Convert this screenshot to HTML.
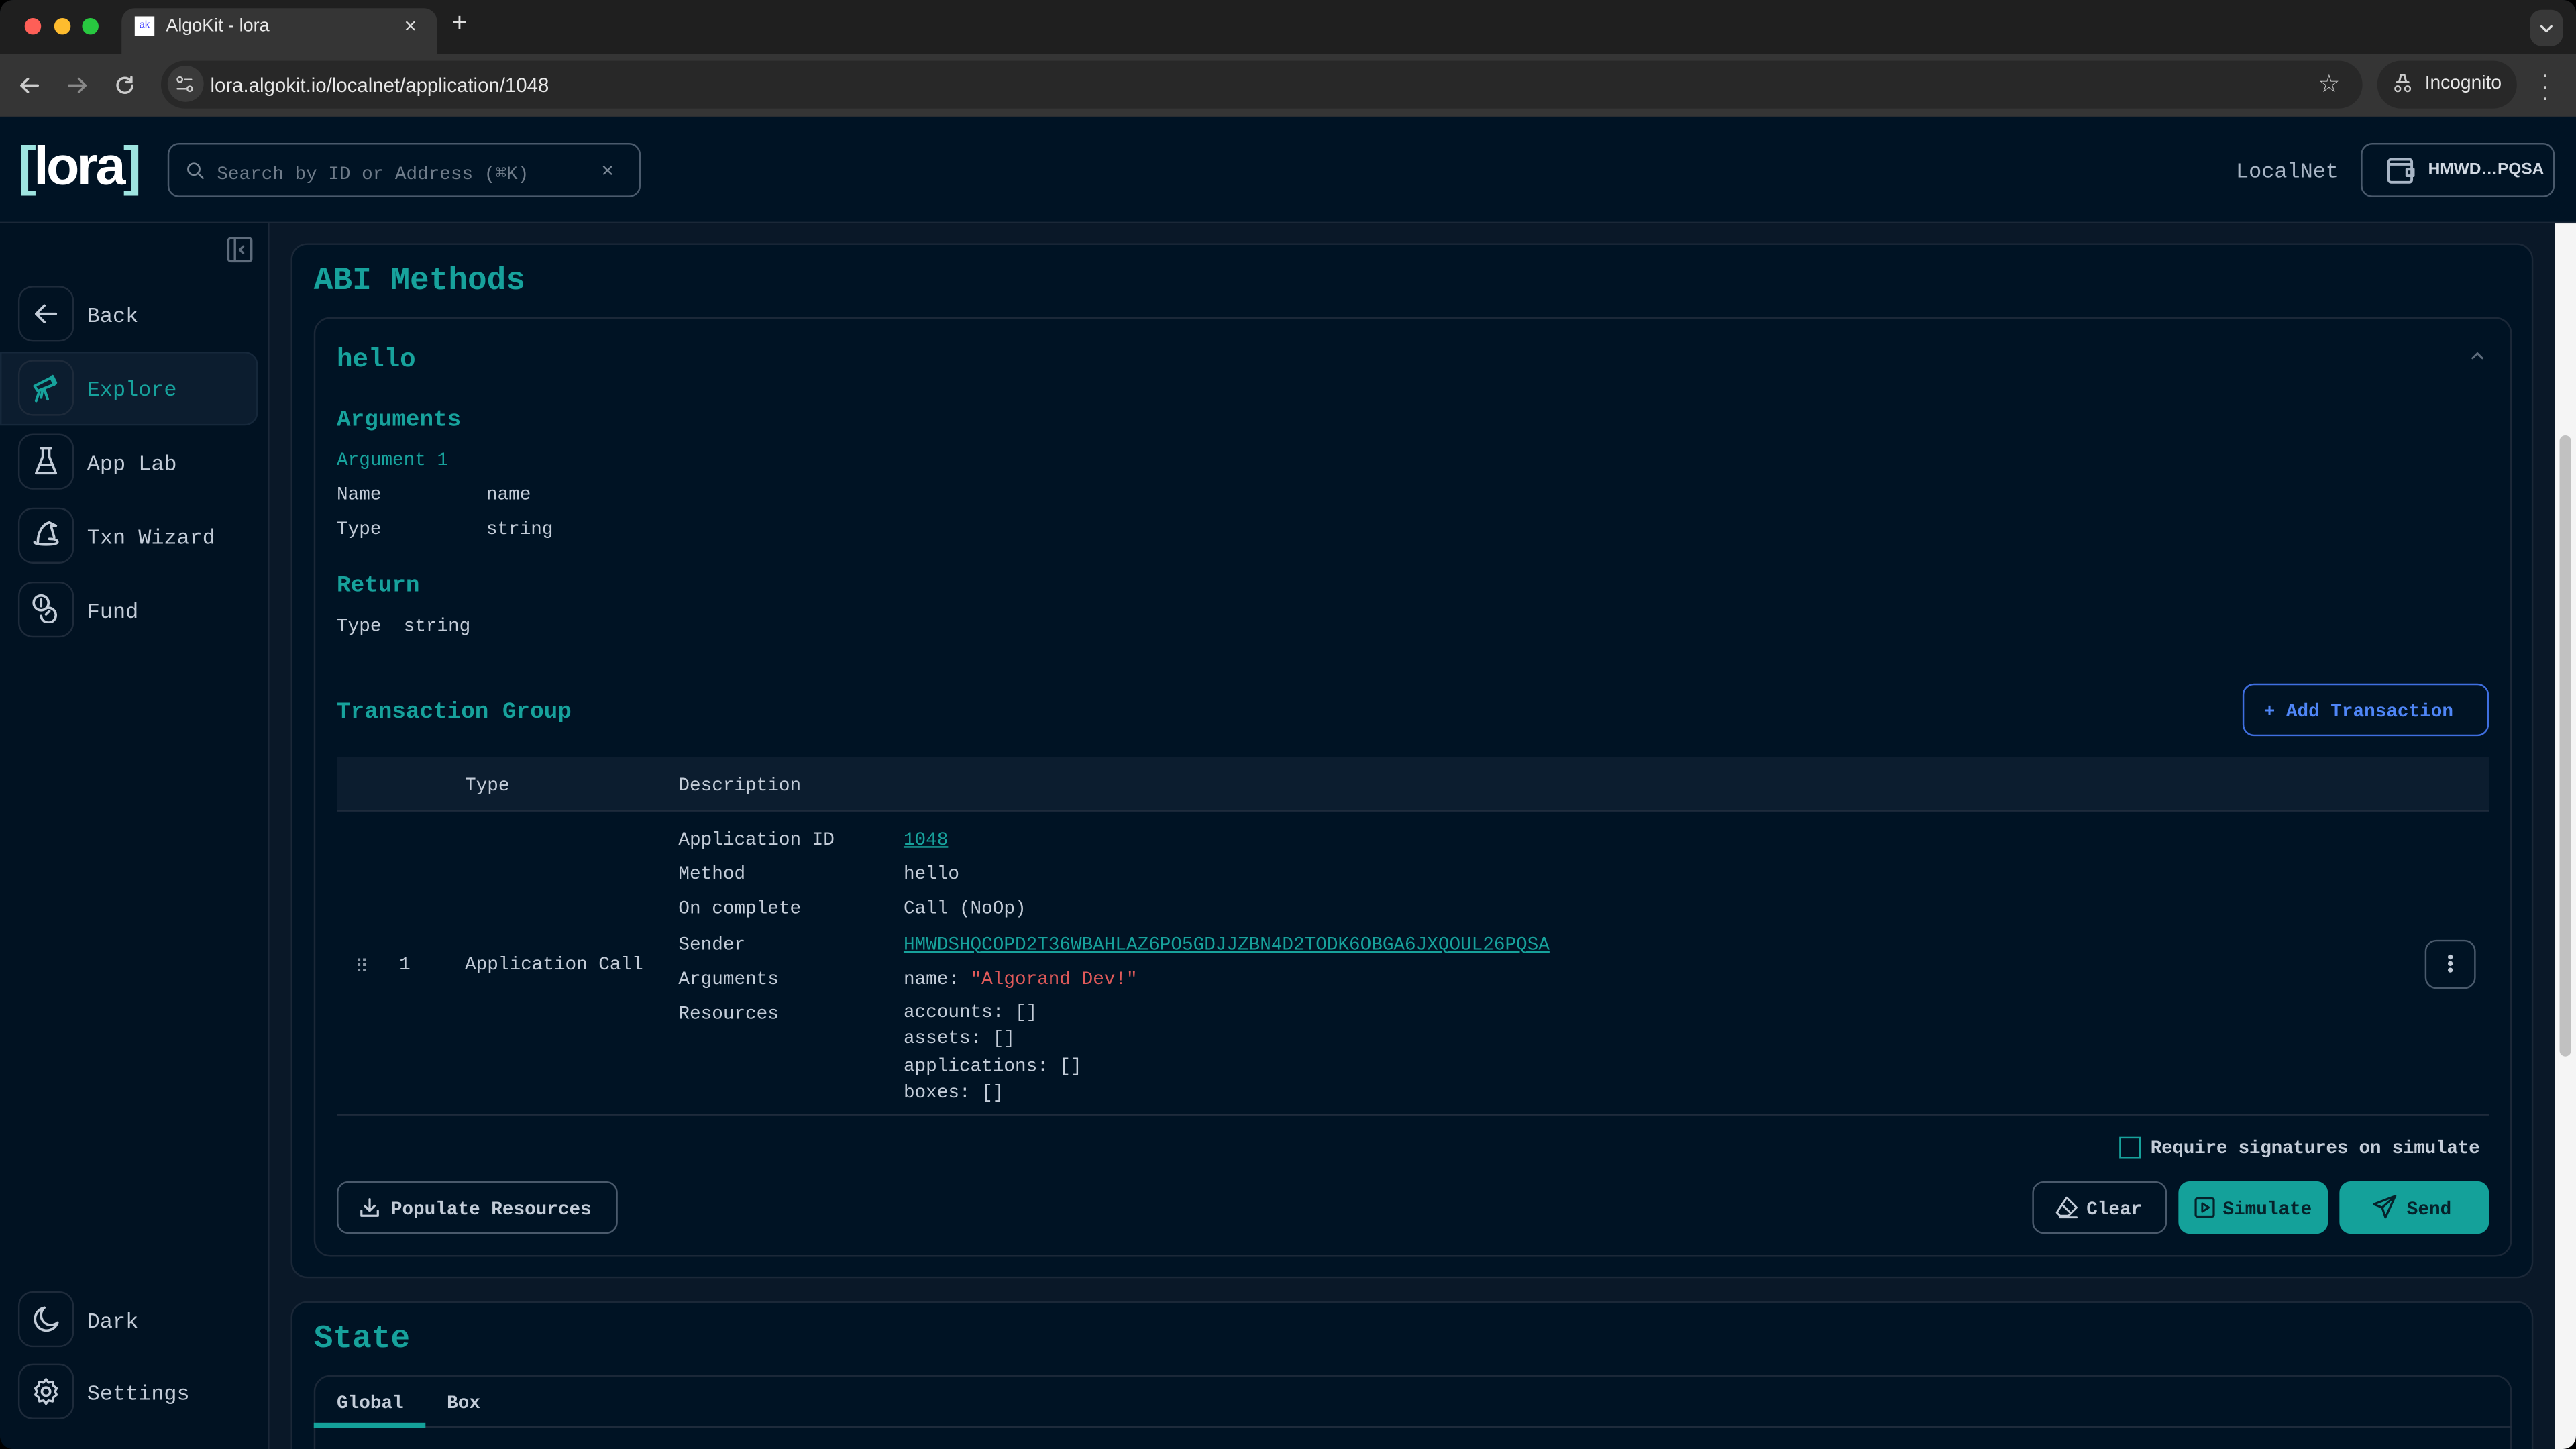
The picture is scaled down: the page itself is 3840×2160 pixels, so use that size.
<!DOCTYPE html>
<html><head><meta charset="utf-8"><style>
*{box-sizing:border-box;margin:0;padding:0}
html,body{width:3840px;height:2160px;overflow:hidden;background:#000}
#s{position:absolute;left:0;top:0;width:1568px;height:882px;transform:scale(2.44898);transform-origin:0 0;background:#0a1828;font-family:"Liberation Mono",monospace;color:#c3ccd8;overflow:hidden;border-radius:8px}
.a{position:absolute}
.sans{font-family:"Liberation Sans",sans-serif}
.t{color:#17a29c}
.box{position:absolute;border:1px solid #1e2b3b;border-radius:7px}
svg{position:absolute;fill:none;stroke-linecap:round;stroke-linejoin:round}
.fs{font-size:11.3px}
.fs,.t,.sb{margin-top:2px}
.bt{margin-top:4px}
</style></head><body><div id="s">
<!-- chrome -->
<div class="a" style="left:0;top:0;width:1568px;height:33px;background:#1f1f1f"></div>
<div class="a" style="left:15px;top:11px;width:10px;height:10px;border-radius:50%;background:#fe5f57"></div>
<div class="a" style="left:33px;top:11px;width:10px;height:10px;border-radius:50%;background:#febc2e"></div>
<div class="a" style="left:50px;top:11px;width:10px;height:10px;border-radius:50%;background:#28c840"></div>
<div class="a" style="left:74px;top:5px;width:192px;height:30px;background:#353535;border-radius:8px 8px 0 0"></div>
<div class="a sans" style="left:82px;top:10px;width:12px;height:12px;background:#fff;font-size:6px;color:#33f;text-align:center;line-height:12px">ak</div>
<div class="a sans" style="left:101px;top:10px;font-size:11px;color:#e8e8e8">AlgoKit - lora</div>
<div class="a sans" style="left:246px;top:8px;font-size:13px;color:#ddd">×</div>
<div class="a sans" style="left:275px;top:6px;font-size:16px;color:#ddd">+</div>
<div class="a" style="left:1540px;top:6px;width:20px;height:22px;background:#383838;border-radius:7px"></div>
<svg style="left:1545px;top:12px" width="10" height="10" viewBox="0 0 10 10"><path d="M2 4l3 3 3-3" stroke="#ddd" stroke-width="1.3"/></svg>
<div class="a" style="left:0;top:33px;width:1568px;height:38px;background:#353535"></div>
<svg style="left:10px;top:44px" width="16" height="16" viewBox="0 0 16 16"><path d="M13 8H3M7 4L3 8l4 4" stroke="#ccc" stroke-width="1.4"/></svg>
<svg style="left:39px;top:44px" width="16" height="16" viewBox="0 0 16 16"><path d="M3 8h10M9 4l4 4-4 4" stroke="#888" stroke-width="1.4"/></svg>
<svg style="left:68px;top:44px" width="16" height="16" viewBox="0 0 16 16"><path d="M12.5 8a4.5 4.5 0 1 1-1.3-3.2M12 3v3h-3" stroke="#ccc" stroke-width="1.4"/></svg>
<div class="a" style="left:98px;top:37px;width:1340px;height:29px;background:#282828;border-radius:15px"></div>
<div class="a" style="left:102px;top:40px;width:22px;height:22px;background:#3a3a3a;border-radius:50%"></div>
<svg style="left:106px;top:45px" width="13" height="13" viewBox="0 0 13 13"><circle cx="3.5" cy="3.5" r="1.5" stroke="#ccc"/><path d="M6.5 3.5h4M2 9h5" stroke="#ccc"/><circle cx="9.5" cy="9" r="1.5" stroke="#ccc"/></svg>
<div class="a sans" style="left:128px;top:45px;font-size:12px;color:#e8e8e8">lora.algokit.io/localnet/application/1048</div>
<div class="a sans" style="left:1411px;top:42px;font-size:15px;color:#ccc">☆</div>
<div class="a" style="left:1447px;top:37px;width:85px;height:29px;background:#282828;border-radius:15px"></div>
<div class="a sans" style="left:1476px;top:45px;font-size:11.5px;color:#e8e8e8">Incognito</div>
<svg style="left:1456px;top:44px" width="13" height="13" viewBox="0 0 13 13"><path d="M3 6h7M4.5 5.5l1-4h2l1 4" stroke="#ccc" stroke-width="1.2"/><circle cx="3.5" cy="10" r="1.6" stroke="#ccc"/><circle cx="9.5" cy="10" r="1.6" stroke="#ccc"/></svg>
<div class="a sans" style="left:1547px;top:42px;font-size:14px;color:#ccc;line-height:7px">·<br>·<br>·</div>
<!-- header -->
<div class="a" style="left:0;top:71px;width:1568px;height:65px;background:#001324;border-bottom:1px solid #1b2838"></div>
<div class="a sans" style="left:11px;top:82px;font-size:33px;font-weight:bold;color:#fff;letter-spacing:-1.5px"><span style="color:#9ee4e0">[</span>lora<span style="color:#9ee4e0">]</span></div>
<div class="a" style="left:102px;top:87px;width:288px;height:33px;border:1px solid #4a5a6c;border-radius:7px"></div>
<svg style="left:113px;top:98px" width="12" height="12" viewBox="0 0 12 12"><circle cx="5" cy="5" r="3.5" stroke="#7b8896" stroke-width="1.1"/><path d="M8 8l2.5 2.5" stroke="#7b8896" stroke-width="1.1"/></svg>
<div class="a fs" style="left:132px;top:97px;color:#6f7c8a">Search by ID or Address (⌘K)</div>
<div class="a sans" style="left:366px;top:96px;font-size:13px;color:#7b8896">×</div>
<div class="a" style="left:1361px;top:97px;font-size:13px;color:#a9b6c6">LocalNet</div>
<div class="a" style="left:1437px;top:87px;width:118px;height:33px;border:1px solid #4a5a6c;border-radius:7px"></div>
<svg style="left:1452px;top:94px" width="20" height="20" viewBox="0 0 20 20"><rect x="2" y="3" width="14" height="14" rx="1.5" stroke="#a9b6c6" stroke-width="1.6"/><path d="M2 6h13M13 9h4v4h-4z" stroke="#a9b6c6" stroke-width="1.6"/></svg>
<div class="a sans" style="left:1478px;top:98px;font-size:10px;font-weight:bold;color:#d0d8e2">HMWD…PQSA</div>
<!-- sidebar -->
<div class="a" style="left:0;top:136px;width:164px;height:746px;background:#011222;border-right:1px solid #1b2838"></div>
<svg style="left:138px;top:144px" width="16" height="16" viewBox="0 0 16 16"><rect x="1" y="1" width="14" height="14" rx="1.5" stroke="#5e6c7c" stroke-width="1.4"/><path d="M5 1v14M10 6l-2 2 2 2" stroke="#5e6c7c" stroke-width="1.4"/></svg>
<div class="a" style="left:0;top:214px;width:157px;height:45px;background:#0c1d2f;border:1px solid #16283b;border-radius:0 8px 8px 0"></div>
<div class="box" style="left:11px;top:174px;width:34px;height:34px;border-radius:9px"></div>
<div class="box" style="left:11px;top:219px;width:34px;height:34px;border-radius:9px"></div>
<div class="box" style="left:11px;top:264px;width:34px;height:34px;border-radius:9px"></div>
<div class="box" style="left:11px;top:309px;width:34px;height:34px;border-radius:9px"></div>
<div class="box" style="left:11px;top:354px;width:34px;height:34px;border-radius:9px"></div>
<div class="box" style="left:11px;top:786px;width:34px;height:34px;border-radius:9px"></div>
<div class="box" style="left:11px;top:830px;width:34px;height:34px;border-radius:9px"></div>
<svg style="left:20px;top:183px" width="16" height="16" viewBox="0 0 16 16"><path d="M14 8H2M7 3L2 8l5 5" stroke="#c3ccd8" stroke-width="1.5"/></svg>
<svg style="left:19px;top:227px" width="18" height="18" viewBox="0 0 18 18"><path d="M2 8l10-5 2 4-10 4zM5 11l-2 6M8 10l2 6M7 10l-1 5" stroke="#17a29c" stroke-width="1.6"/><path d="M12 3l1-1 2 4-1 1" stroke="#17a29c" stroke-width="1.6"/></svg>
<svg style="left:20px;top:272px" width="16" height="18" viewBox="0 0 16 18"><path d="M5 1h6M6 1v5L2 16h12L10 6V1M4 11h8" stroke="#c3ccd8" stroke-width="1.5"/></svg>
<svg style="left:18px;top:316px" width="20" height="18" viewBox="0 0 20 18"><path d="M5 14C5 8 8 3 12 2l4 2-3 0 2 7M3 14c0 2 14 2 14 0s-4-2-5-2" stroke="#c3ccd8" stroke-width="1.5"/></svg>
<svg style="left:19px;top:361px" width="18" height="18" viewBox="0 0 18 18"><circle cx="6" cy="6" r="4.5" stroke="#c3ccd8" stroke-width="1.5"/><path d="M6 4v4M10 9a4.5 4.5 0 1 1-4 5M9 13l2-2" stroke="#c3ccd8" stroke-width="1.5"/></svg>
<svg style="left:19px;top:794px" width="18" height="18" viewBox="0 0 18 18"><path d="M8 2a7 7 0 1 0 8 9A5.5 5.5 0 0 1 8 2z" stroke="#c3ccd8" stroke-width="1.5"/></svg>
<svg style="left:19px;top:838px" width="18" height="18" viewBox="0 0 18 18"><circle cx="9" cy="9" r="2.5" stroke="#c3ccd8" stroke-width="1.5"/><path d="M9 1.5l1.5 2 2.5-.5.5 2.5 2 1.5-1 2 1 2-2 1.5-.5 2.5-2.5-.5L9 16.5l-1.5-2-2.5.5-.5-2.5-2-1.5 1-2-1-2 2-1.5.5-2.5 2.5.5z" stroke="#c3ccd8" stroke-width="1.4"/></svg>
<div class="a sb" style="left:53px;top:183px;font-size:13px">Back</div>
<div class="a t" style="left:53px;top:228px;font-size:13px">Explore</div>
<div class="a sb" style="left:53px;top:273px;font-size:13px">App Lab</div>
<div class="a sb" style="left:53px;top:318px;font-size:13px">Txn Wizard</div>
<div class="a sb" style="left:53px;top:363px;font-size:13px">Fund</div>
<div class="a sb" style="left:53px;top:795px;font-size:13px">Dark</div>
<div class="a sb" style="left:53px;top:839px;font-size:13px">Settings</div>
<!-- scrollbar -->
<div class="a" style="left:1555px;top:136px;width:13px;height:746px;background:#f5f5f5"></div>
<div class="a" style="left:1558px;top:265px;width:7px;height:378px;background:#c1c1c1;border-radius:4px"></div>
<!-- ABI card -->
<div class="a" style="left:177px;top:148px;width:1365px;height:630px;background:#001324;border:1px solid #1b2838;border-radius:10px"></div>
<div class="a t" style="left:191px;top:158px;font-size:19.5px;font-weight:bold">ABI Methods</div>
<div class="a" style="left:191px;top:193px;width:1338px;height:572px;border:1px solid #1b2838;border-radius:10px"></div>
<div class="a t" style="left:205px;top:208px;font-size:16px;font-weight:bold">hello</div>
<svg style="left:1503px;top:213px" width="10" height="8" viewBox="0 0 10 8"><path d="M2 5l3-3 3 3" stroke="#5e6c7c" stroke-width="1.2"/></svg>
<div class="a t" style="left:205px;top:246px;font-size:14px;font-weight:bold">Arguments</div>
<div class="a t fs" style="left:205px;top:273px">Argument 1</div>
<div class="a fs" style="left:205px;top:294px">Name</div><div class="a fs" style="left:296px;top:294px">name</div>
<div class="a fs" style="left:205px;top:315px">Type</div><div class="a fs" style="left:296px;top:315px">string</div>
<div class="a t" style="left:205px;top:347px;font-size:14px;font-weight:bold">Return</div>
<div class="a fs" style="left:205px;top:374px">Type&nbsp;&nbsp;string</div>
<div class="a t" style="left:205px;top:424px;font-size:14px;font-weight:bold">Transaction Group</div>
<div class="a" style="left:1365px;top:416px;width:150px;height:32px;border:1px solid #3f6fe0;border-radius:7px"></div>
<div class="a fs bt" style="left:1378px;top:424px;color:#4f86f7;font-weight:bold">+ Add Transaction</div>
<div class="a" style="left:205px;top:461px;width:1310px;height:33px;background:#0c1d2f;border-bottom:1px solid #1e2b3b"></div>
<div class="a fs" style="left:283px;top:471px">Type</div>
<div class="a fs" style="left:413px;top:471px">Description</div>
<div class="a fs" style="left:413px;top:500px;line-height:21.2px">Application ID<br>Method<br>On complete<br>Sender<br>Arguments<br>Resources</div>
<div class="a fs" style="left:550px;top:500px;line-height:21.2px"><span class="t" style="text-decoration:underline">1048</span><br>hello<br>Call (NoOp)<br><span class="t" style="text-decoration:underline">HMWDSHQCOPD2T36WBAHLAZ6PO5GDJJZBN4D2TODK6OBGA6JXQOUL26PQSA</span><br>name: <span style="color:#e05a5a">"Algorand Dev!"</span></div>
<div class="a fs" style="left:550px;top:607px;line-height:16.4px">accounts: []<br>assets: []<br>applications: []<br>boxes: []</div>
<div class="a fs" style="left:216px;top:580px;color:#8a96a4">⠿</div>
<div class="a fs" style="left:243px;top:580px">1</div>
<div class="a fs" style="left:283px;top:580px">Application Call</div>
<div class="a" style="left:1476px;top:572px;width:31px;height:30px;border:1px solid #4a5a6c;border-radius:7px"></div>
<div class="a" style="left:1490px;top:581px;width:3px;height:3px;border-radius:50%;background:#c3ccd8;box-shadow:0 4px 0 #c3ccd8,0 8px 0 #c3ccd8"></div>
<div class="a" style="left:205px;top:678px;width:1310px;height:1px;background:#1e2b3b"></div>
<div class="a" style="left:1290px;top:692px;width:13px;height:13px;border:1px solid #17a29c"></div>
<div class="a fs bt" style="left:1309px;top:690px;font-weight:bold;letter-spacing:-0.1px">Require signatures on simulate</div>
<div class="a" style="left:205px;top:719px;width:171px;height:32px;border:1px solid #4a5a6c;border-radius:7px"></div>
<svg style="left:218px;top:728px" width="14" height="14" viewBox="0 0 14 14"><path d="M7 2v7M4 6l3 3 3-3M2 9v3h10V9" stroke="#c3ccd8" stroke-width="1.3"/></svg>
<div class="a fs bt" style="left:238px;top:727px;font-weight:bold">Populate Resources</div>
<div class="a" style="left:1237px;top:719px;width:82px;height:32px;border:1px solid #4a5a6c;border-radius:7px"></div>
<svg style="left:1251px;top:728px" width="14" height="14" viewBox="0 0 14 14"><path d="M7 1l6 6-5 5H3L1 10zM4 5l5 5M3 13h10" stroke="#c3ccd8" stroke-width="1.2"/></svg>
<div class="a fs bt" style="left:1270px;top:727px;font-weight:bold">Clear</div>
<div class="a" style="left:1326px;top:719px;width:91px;height:32px;background:#14a19a;border-radius:7px"></div>
<svg style="left:1335px;top:728px" width="14" height="14" viewBox="0 0 14 14"><rect x="1.5" y="1.5" width="11" height="11" rx="1" stroke="#06222a" stroke-width="1.3"/><path d="M5.5 4.5v5l4-2.5z" stroke="#06222a" stroke-width="1.2"/></svg>
<div class="a fs bt" style="left:1353px;top:727px;font-weight:bold;color:#06222a">Simulate</div>
<div class="a" style="left:1424px;top:719px;width:91px;height:32px;background:#14a19a;border-radius:7px"></div>
<svg style="left:1444px;top:727px" width="15" height="15" viewBox="0 0 15 15"><path d="M14 1L1 6l5 2 2 6zM6 8l8-7" stroke="#06222a" stroke-width="1.3"/></svg>
<div class="a fs bt" style="left:1465px;top:727px;font-weight:bold;color:#06222a">Send</div>
<!-- State -->
<div class="a" style="left:177px;top:792px;width:1365px;height:120px;background:#001324;border:1px solid #1b2838;border-radius:10px"></div>
<div class="a t" style="left:191px;top:802px;font-size:19.5px;font-weight:bold">State</div>
<div class="a" style="left:191px;top:837px;width:1338px;height:80px;border:1px solid #1b2838;border-radius:10px"></div>
<div class="a fs bt" style="left:205px;top:845px;font-weight:bold">Global</div>
<div class="a fs bt" style="left:272px;top:845px;font-weight:bold">Box</div>
<div class="a" style="left:191px;top:868px;width:1338px;height:1px;background:#1e2b3b"></div>
<div class="a" style="left:191px;top:866px;width:68px;height:3px;background:#14a19a"></div>
</div></body></html>
